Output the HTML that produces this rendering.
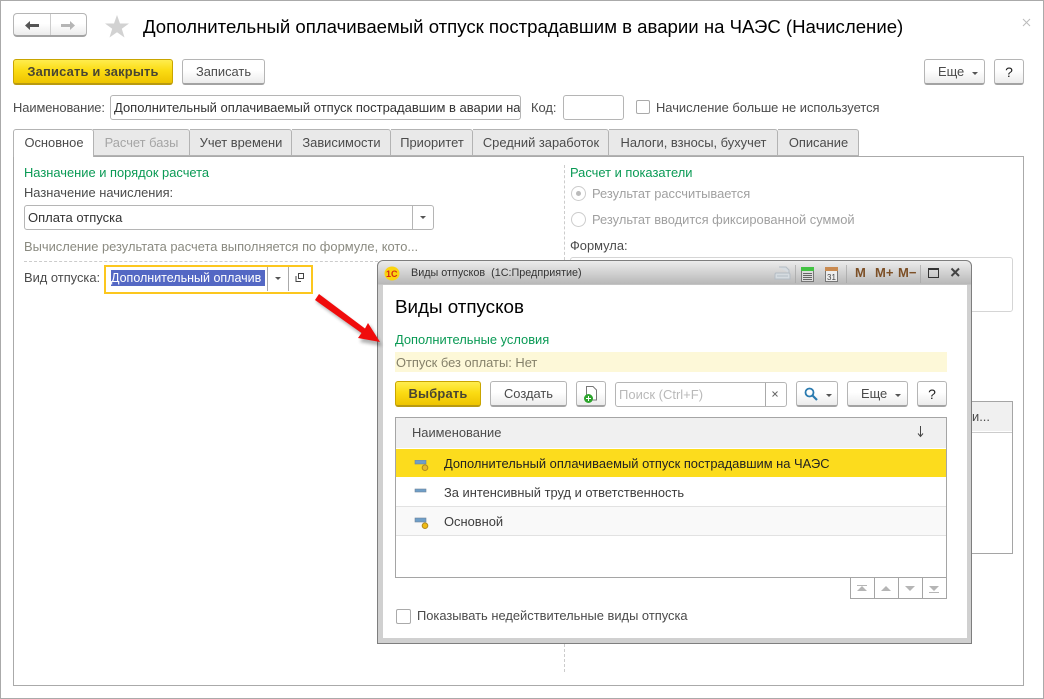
<!DOCTYPE html>
<html lang="ru"><head><meta charset="utf-8"><title>Начисление</title>
<style>
html,body{margin:0;padding:0;background:#fff}
#r{position:relative;width:1044px;height:699px;overflow:hidden;background:#fff;font:12.9px "Liberation Sans",sans-serif;color:#4b4b4b}
#r div,#r span.a,#r svg{position:absolute;box-sizing:border-box}
.t{white-space:nowrap;line-height:18px}
.btn{border:1px solid #b5b5b5;border-bottom:2px solid #a3a3a3;border-radius:3px;background:linear-gradient(#fff,#fff 45%,#ececec);text-align:center;color:#4b4b4b;line-height:24px;white-space:nowrap}
.y{border:1px solid #c9a500;border-bottom:2px solid #b99a10;background:linear-gradient(#ffed4e,#fbdc14 45%,#eec400);font-weight:bold;color:#4a4632;letter-spacing:.2px}
.inp{border:1px solid #b5b5b5;border-radius:3px;background:#fff;white-space:nowrap;overflow:hidden;line-height:23px;color:#333;font-size:13px}
.tab{top:129px;height:27px;background:#e9e9e9;border:1px solid #b3b3b3;border-left:0;text-align:center;line-height:26px;white-space:nowrap;border-radius:0 3px 0 0;padding-left:1px}
.g{color:#0a9a55}
.dash{border-left:1px dashed #ccc;width:0}
.tri{width:0;height:0;border-left:3px solid transparent;border-right:3px solid transparent;border-top:3px solid #555}
.row{left:396px;width:550px;height:29px;line-height:30px;white-space:nowrap;color:#3d3d3d}
</style></head><body><div id="r">
<div style="left:0;top:0;width:1044px;height:699px;border:1px solid #aaa"></div>

<div class="btn" style="left:13px;top:13px;width:74px;height:24px;border-radius:4px"></div>
<div style="left:50px;top:14px;width:1px;height:21px;background:#ccc"></div>
<svg style="left:24px;top:20px" width="16" height="12"><path d="M1 5.500L6 1V4H15V7H6V10Z" fill="#555"/></svg>
<svg style="left:60px;top:20px" width="16" height="12"><path d="M15 5.500L10 1V4H1V7H10V10Z" fill="#b5b5b5"/></svg>
<svg style="left:104px;top:14px" width="26" height="25"><path d="M13 1L16 9.500H25L17.800 14.800L20.500 23.500L13 18.300L5.500 23.500L8.200 14.800L1 9.500H10Z" fill="#d2d2d2"/></svg>
<div class="t" style="left:143px;top:15px;font-size:18.600px;line-height:24px;color:#000">Дополнительный оплачиваемый отпуск пострадавшим в аварии на ЧАЭС (Начисление)</div>
<svg style="left:1021px;top:18px" width="10" height="10"><path d="M2 1L9 8M9 1L2 8" stroke="#bbb" fill="none"/></svg>

<div class="btn y" style="left:13px;top:59px;width:160px;height:26px">Записать и закрыть</div>
<div class="btn" style="left:182px;top:59px;width:83px;height:26px">Записать</div>
<div class="btn" style="left:924px;top:59px;width:61px;height:26px;text-align:left;padding-left:13px">Еще<div class="tri" style="left:47px;top:12px"></div></div>
<div class="btn" style="left:994px;top:59px;width:30px;height:26px;color:#222;font-size:14px">?</div>

<div class="t" style="left:13px;top:99px;letter-spacing:-.08px">Наименование:</div>
<div class="inp" style="left:110px;top:95px;width:411px;height:25px;padding-left:3px">Дополнительный оплачиваемый отпуск пострадавшим в аварии на</div>
<div class="t" style="left:531px;top:99px">Код:</div>
<div class="inp" style="left:563px;top:95px;width:61px;height:25px"></div>
<div style="left:636px;top:100px;width:14px;height:14px;border:1px solid #aaa;border-radius:2px"></div>
<div class="t" style="left:656px;top:99px">Начисление больше не используется</div>

<div style="left:13px;top:156px;width:1011px;height:530px;border:1px solid #aaa"></div>
<div class="tab" style="left:93px;width:97px;color:#a5a5a5">Расчет базы</div>
<div class="tab" style="left:190px;width:102px">Учет времени</div>
<div class="tab" style="left:292px;width:99px">Зависимости</div>
<div class="tab" style="left:391px;width:82px">Приоритет</div>
<div class="tab" style="left:473px;width:136px">Средний заработок</div>
<div class="tab" style="left:609px;width:169px">Налоги, взносы, бухучет</div>
<div class="tab" style="left:778px;width:81px">Описание</div>
<div class="tab" style="left:13px;width:81px;height:28px;background:#fff;border-left:1px solid #b3b3b3;border-bottom:0;border-radius:3px 3px 0 0">Основное</div>

<div class="t g" style="left:24px;top:164px">Назначение и порядок расчета</div>
<div class="t" style="left:24px;top:184px">Назначение начисления:</div>
<div class="inp" style="left:24px;top:205px;width:410px;height:25px;padding-left:3px">Оплата отпуска</div>
<div style="left:412px;top:206px;width:1px;height:23px;background:#b5b5b5"></div>
<div class="tri" style="left:420px;top:216px"></div>
<div class="t" style="left:24px;top:238px;color:#8a8a80">Вычисление результата расчета выполняется по формуле, кото...</div>
<div style="left:24px;top:261px;width:354px;border-top:1px dashed #ccc"></div>
<div class="t" style="left:24px;top:269px">Вид отпуска:</div>
<div style="left:104px;top:265px;width:209px;height:29px;border:2px solid #fcc71e"></div>
<div class="t" style="left:111px;top:270px;width:154px;height:16px;line-height:17px;background:#5468c4;color:#fff;overflow:hidden;font-size:12.500px">Дополнительный оплачив</div>
<div style="left:267px;top:267px;width:1px;height:24px;background:#aaa"></div>
<div style="left:288px;top:267px;width:1px;height:24px;background:#aaa"></div>
<div class="tri" style="left:275px;top:277px"></div>
<svg style="left:295px;top:273px" width="10" height="10"><path d="M3.500 .5H8.500V5.500H3.500ZM1 3V8.500H6" fill="none" stroke="#444"/></svg>

<div class="dash" style="left:564px;top:165px;height:95px"></div>
<div class="dash" style="left:564px;top:644px;height:28px"></div>
<div class="t g" style="left:570px;top:164px">Расчет и показатели</div>
<div style="left:571px;top:186px;width:15px;height:15px;border:1px solid #ccc;border-radius:50%"></div>
<div style="left:576px;top:191px;width:5px;height:5px;background:#bbb;border-radius:50%"></div>
<div class="t" style="left:592px;top:185px;color:#a0a0a0">Результат рассчитывается</div>
<div style="left:571px;top:212px;width:15px;height:15px;border:1px solid #ccc;border-radius:50%"></div>
<div class="t" style="left:592px;top:211px;color:#a0a0a0">Результат вводится фиксированной суммой</div>
<div class="t" style="left:570px;top:237px">Формула:</div>
<div style="left:570px;top:257px;width:443px;height:55px;border:1px solid #d5d5d5;border-radius:3px"></div>
<div style="left:900px;top:401px;width:113px;height:153px;border:1px solid #a5a5a5"></div>
<div style="left:901px;top:402px;width:111px;height:30px;background:#f0f0f0;border-bottom:1px solid #fff"></div>
<div style="left:901px;top:432px;width:111px;height:1px;background:#ccc"></div>
<div class="t" style="left:972px;top:408px">и...</div>

<div style="left:377px;top:260px;width:595px;height:384px;border:1px solid #7e7e7e;border-radius:6px 6px 0 0;background:linear-gradient(#ececec,#b8b8b8 23px,#d0d0d0 24px,#d0d0d0)"></div>
<div style="left:383px;top:285px;width:584px;height:353px;background:#fff"></div>
<svg style="left:384px;top:266px" width="16" height="15"><ellipse cx="8" cy="7.500" rx="7.500" ry="7" fill="#fbd40f"/><text x="2" y="11" font-family="Liberation Sans" font-size="9" font-weight="bold" fill="#d42a12">1C</text></svg>
<div class="t" style="left:411px;top:264px;font-size:10.800px;color:#333;white-space:pre">Виды отпусков  (1С:Предприятие)</div>
<svg style="left:773px;top:264px" width="200" height="20">
<path d="M6 3H13L16 6V9M3 9H16Q17 9 17 11V15H2V11Q2 9 3 9ZM4 12H15" fill="#d5dbe0" stroke="#b4bcc4"/>
<rect x="28.500" y="3.500" width="12" height="14" fill="#ddd" stroke="#777"/><rect x="28" y="3" width="13" height="4" fill="#43c343"/><path d="M30 9.500h9M30 11.500h9M30 13.500h9M30 15.500h9" stroke="#666"/>
<rect x="52.500" y="4.500" width="12" height="13" fill="#eee" stroke="#777"/><rect x="52" y="3" width="13" height="4" fill="#c98a50"/><text x="54" y="16" font-family="Liberation Sans" font-size="8" fill="#444">31</text>
<path d="M22.500 1V19M73.500 1V19M147.500 1V19" stroke="#a5a5a5" opacity=".7"/>
<rect x="155.500" y="4.500" width="10" height="9" fill="none" stroke="#333"/><path d="M155 5.500H166" stroke="#333"/>
<path d="M178.500 4.500L186 12M186 4.500L178.500 12" stroke="#444" stroke-width="2"/>
</svg>
<div class="t" style="left:855px;top:264px;font-size:13px;font-weight:bold;color:#7d5027">M</div>
<div class="t" style="left:875px;top:264px;font-size:13px;font-weight:bold;color:#7d5027">M+</div>
<div class="t" style="left:898px;top:264px;font-size:13px;font-weight:bold;color:#7d5027">M−</div>

<div class="t" style="left:395px;top:296px;font-size:18.800px;line-height:22px;color:#000">Виды отпусков</div>
<div class="t g" style="left:395px;top:331px">Дополнительные условия</div>
<div class="t" style="left:395px;top:352px;width:552px;height:20px;line-height:21px;background:#fdf8d8;padding-left:1px;color:#85816a">Отпуск без оплаты: Нет</div>
<div class="btn y" style="left:395px;top:381px;width:86px;height:26px">Выбрать</div>
<div class="btn" style="left:490px;top:381px;width:77px;height:26px">Создать</div>
<div class="btn" style="left:576px;top:381px;width:30px;height:26px"></div>
<svg style="left:583px;top:386px" width="17" height="18"><path d="M3.500 .5H10L13.500 4V14H3.500Z" fill="#fff" stroke="#777"/><circle cx="5.500" cy="12.500" r="4.500" fill="#2da52d"/><path d="M3 12.500H8M5.500 10V15" stroke="#fff"/></svg>
<div class="inp" style="left:615px;top:382px;width:172px;height:25px;padding-left:3px;color:#b9b9b9">Поиск (Ctrl+F)</div>
<div style="left:765px;top:383px;width:1px;height:23px;background:#aaa"></div>
<svg style="left:771px;top:390px" width="9" height="9"><path d="M1.500 1.500L6.500 6.500M6.500 1.500L1.500 6.500" stroke="#666"/></svg>
<div class="btn" style="left:796px;top:381px;width:42px;height:26px"></div>
<svg style="left:804px;top:387px" width="15" height="15"><circle cx="5.500" cy="5.500" r="4" fill="none" stroke="#2b7bb0" stroke-width="1.800"/><path d="M8.500 8.500L13 13" stroke="#2b7bb0" stroke-width="2.200"/></svg>
<div class="tri" style="left:826px;top:394px"></div>
<div class="btn" style="left:847px;top:381px;width:61px;height:26px;text-align:left;padding-left:13px">Еще<div class="tri" style="left:47px;top:12px"></div></div>
<div class="btn" style="left:917px;top:381px;width:30px;height:26px;color:#222;font-size:14px">?</div>

<div style="left:395px;top:417px;width:552px;height:161px;border:1px solid #a5a5a5"></div>
<div class="t" style="left:396px;top:418px;width:550px;height:30px;background:#f0f0f0;padding-left:16px;line-height:30px">Наименование</div>
<svg style="left:916px;top:425px" width="9" height="13"><path d="M4.500 1V11M2 8.500L4.500 11.500L7 8.500" fill="none" stroke="#444"/></svg>
<div class="row" style="top:449px;height:28px;background:#fcdc1d;color:#222;padding-left:48px">Дополнительный оплачиваемый отпуск пострадавшим на ЧАЭС</div>
<div class="row" style="top:478px;height:29px;border-bottom:1px solid #e2e2e2;padding-left:48px">За интенсивный труд и ответственность</div>
<div class="row" style="top:507px;height:29px;background:#f9f9f9;border-bottom:1px solid #e2e2e2;padding-left:48px">Основной</div>
<svg style="left:414px;top:460px" width="16" height="72">
<rect x="1" y="0" width="11" height="4" fill="#6f9fc8" stroke="#6f8499" stroke-width=".6"/><circle cx="11" cy="7.700" r="2.800" fill="#e8b92a" stroke="#b08a20"/>
<rect x="1" y="29" width="11" height="3" fill="#6f9fc8" stroke="#6f8499" stroke-width=".6"/>
<rect x="1" y="58" width="11" height="4" fill="#6f9fc8" stroke="#6f8499" stroke-width=".6"/><circle cx="11" cy="65.700" r="2.800" fill="#f0bb14" stroke="#b08a20"/>
</svg>
<div style="left:850px;top:577px;width:97px;height:22px;border:1px solid #a5a5a5"></div>
<div style="left:874px;top:578px;width:1px;height:20px;background:#a5a5a5"></div>
<div style="left:898px;top:578px;width:1px;height:20px;background:#a5a5a5"></div>
<div style="left:922px;top:578px;width:1px;height:20px;background:#a5a5a5"></div>
<svg style="left:850px;top:577px" width="97" height="22" fill="#b5b5b5">
<path d="M7 8H17V9H7ZM12 9L17 14H7Z"/><path d="M31 14L36 9L41 14Z"/><path d="M55 9H65L60 14Z"/><path d="M79 9H89L84 14ZM79 15H89V16H79Z"/>
</svg>
<div style="left:396px;top:609px;width:15px;height:15px;border:1px solid #aaa;border-radius:2px"></div>
<div class="t" style="left:417px;top:607px">Показывать недействительные виды отпуска</div>

<svg style="left:310px;top:290px" width="80" height="66"><defs><filter id="f" x="-20%" y="-20%" width="140%" height="140%"><feGaussianBlur stdDeviation="1.500"/></filter></defs><path d="M6 12L10 6L56 42L60 35L72 56L50 52L53 46Z" fill="#000" opacity=".3" filter="url(#f)"/><path d="M5 10L9 4L55 38.500L58 33L70 52L48 48L51.500 43Z" fill="#f00c0c"/></svg>
</div></body></html>
